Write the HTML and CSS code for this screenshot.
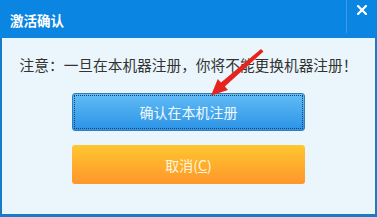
FILE: index.html
```html
<!DOCTYPE html>
<html lang="zh-CN">
<head>
    <meta charset="UTF-8">
    <title>激活确认</title>
    <link rel="stylesheet" href="styles.css">
</head>
<body>
    <div class="dialog">
        <div class="titlebar">
            <span class="title">激活确认</span>
            <span class="sep"></span>
            <a href="javascript:" class="close">
                <svg width="10" height="10" viewBox="0 0 10 10">
                    <path d="M1 1 L9 9 M9 1 L1 9" stroke="#fff" stroke-width="2.2" stroke-linecap="square"/>
                </svg>
            </a>
        </div>
        <div class="content">
            <p class="notice">注意：一旦在本机器注册，你将不能更换机器注册！</p>
            <a href="javascript:" class="btn ok"><span class="focus">确认在本机注册</span></a>
            <a href="javascript:" class="btn cancel">取消(<u>C</u>)</a>

            <svg class="arrow" width="60" height="56" viewBox="0 0 60 56">
                <path d="M55 3 L57.5 5.5 L18.8 40.4 L22 44 L5 49.5 L11.8 33 L15 36.4 Z" fill="#e8231d"/>
            </svg>
        </div>
    </div>
</body>
</html>
```

FILE: styles.css
```css
* {
    padding: 0;
    margin: 0;
    text-decoration: none;
}

body {
    font-family: "Noto Sans CJK SC", "Noto Sans", sans-serif;
    background: #fff;
}

.dialog {
    display: flex;
    flex-direction: column;
    width: 377px;
    height: 217px;
    background: #1a7cc6;
}

.titlebar {
    display: flex;
    align-items: flex-start;
    height: 38px;
    background: #0b85e2;
}
.title {
    margin: 10px 0 0 10px;
    font-size: 13.5px;
    font-weight: bold;
    line-height: 20px;
    color: #fff;
}
.sep {
    width: 1px;
    height: 33px;
    margin-left: auto;
    background: #3b9be6;
}
.close {
    display: flex;
    justify-content: center;
    width: 30px;
    padding-top: 5px;
}

.content {
    position: relative;
    flex: 1;
    display: flex;
    flex-direction: column;
    align-items: center;
    margin: 0 2px 3px 2px;
    background: #eaf6fb;
}

.notice {
    margin-top: 17px;
    font-size: 14.7px;
    line-height: 20px;
    color: #333;
    white-space: nowrap;
}

.btn {
    display: flex;
    align-items: center;
    justify-content: center;
    width: 233px;
    border-radius: 3px;
    font-size: 14px;
    color: #fff;
}
.ok {
    height: 38px;
    margin-top: 18px;
    padding: 1px;
    box-sizing: border-box;
    background: linear-gradient(#62bcf6, #2b93e6);
    border: 1px solid #2f7fc0;
}
.ok .focus {
    display: flex;
    align-items: center;
    justify-content: center;
    width: 100%;
    height: 100%;
    box-sizing: border-box;
    border: 1px dotted #1b3f66;
    color: #f2f9ff;
}
.cancel {
    height: 39px;
    margin-top: 14px;
    background: linear-gradient(#ffc72f, #ff962c);
    color: #fff6dc;
}
.cancel u {
    text-decoration: underline;
}

.arrow {
    position: absolute;
    left: 204px;
    top: 8px;
}
```
